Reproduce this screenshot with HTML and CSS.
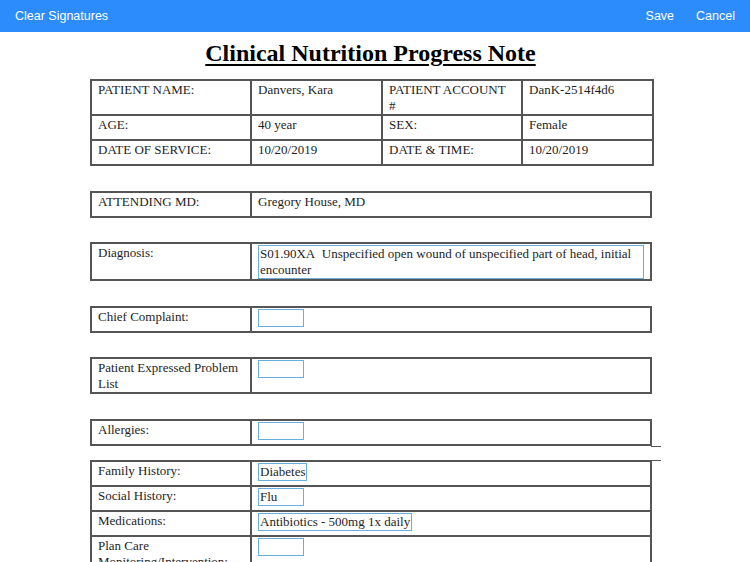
FILE: index.html
```html
<!DOCTYPE html>
<html>
<head>
<meta charset="utf-8">
<link rel="stylesheet" href="styles.css">
</head>
<body>
<header class="topbar">
  <span class="btn">Clear Signatures</span>
  <div class="right">
    <span class="btn">Save</span>
    <span class="btn">Cancel</span>
  </div>
</header>
<main class="page">
  <h1 class="title">Clinical Nutrition Progress Note</h1>

  <table class="grid four">
    <colgroup><col class="c1"><col class="c2"><col class="c3"><col class="c4"></colgroup>
    <tr><td>PATIENT NAME:</td><td>Danvers, Kara</td><td>PATIENT ACCOUNT #</td><td>DanK-2514f4d6</td></tr>
    <tr><td>AGE:</td><td>40 year</td><td>SEX:</td><td>Female</td></tr>
    <tr><td>DATE OF SERVICE:</td><td>10/20/2019</td><td>DATE &amp; TIME:</td><td>10/20/2019</td></tr>
  </table>

  <table class="grid two">
    <colgroup><col class="c1"><col></colgroup>
    <tr><td>ATTENDING MD:</td><td>Gregory House, MD</td></tr>
  </table>

  <table class="grid two">
    <colgroup><col class="c1"><col></colgroup>
    <tr><td>Diagnosis:</td><td><span class="field wide">S01.90XA&nbsp; Unspecified open wound of unspecified part of head, initial encounter</span></td></tr>
  </table>

  <table class="grid two">
    <colgroup><col class="c1"><col></colgroup>
    <tr><td>Chief Complaint:</td><td><span class="field"></span></td></tr>
  </table>

  <table class="grid two">
    <colgroup><col class="c1"><col></colgroup>
    <tr><td>Patient Expressed Problem List</td><td><span class="field"></span></td></tr>
  </table>

  <div class="tablewrap">
    <table class="grid two">
      <colgroup><col class="c1"><col></colgroup>
      <tr><td>Allergies:</td><td><span class="field"></span></td></tr>
    </table>
    <span class="stub stub-a"></span>
  </div>

  <div class="tablewrap near">
    <span class="stub stub-b"></span>
    <table class="grid two">
      <colgroup><col class="c1"><col></colgroup>
      <tr><td>Family History:</td><td><span class="field">Diabetes</span></td></tr>
      <tr><td>Social History:</td><td><span class="field">Flu</span></td></tr>
      <tr><td>Medications:</td><td><span class="field">Antibiotics - 500mg 1x daily</span></td></tr>
      <tr><td>Plan Care Monitoring/Intervention:</td><td><span class="field"></span></td></tr>
    </table>
  </div>
</main>
</body>
</html>
```

FILE: styles.css
```css
html, body {
  margin: 0;
  padding: 0;
  background: #ffffff;
  height: 562px;
  overflow: hidden;
}

.topbar {
  height: 32px;
  background: #2d8cfb;
  display: flex;
  align-items: center;
  justify-content: space-between;
  padding: 0 15px;
  font-family: "Liberation Sans", Arial, sans-serif;
  font-size: 12.5px;
  color: #ffffff;
}

.topbar .right {
  display: flex;
  gap: 22px;
}

.page {
  padding: 0 0 0 90px;
  font-family: "Liberation Serif", "Times New Roman", serif;
  font-size: 13px;
  color: #1e1e1e;
}

.title {
  width: 561px;
  margin: 6px 0 11px;
  text-align: center;
  font-size: 24px;
  line-height: 30px;
  font-weight: bold;
  text-decoration: underline;
  text-decoration-thickness: 1.5px;
  text-underline-offset: 3px;
  color: #000;
}

.grid {
  width: 562px;
  border-collapse: collapse;
  table-layout: fixed;
  margin-bottom: 24.5px;
}

.grid td {
  border: 2px solid #555555;
  padding: 1px 6px 0;
  height: 22px;
  line-height: 16px;
  vertical-align: top;
}

.c1 { width: 160px; }
.c2 { width: 131px; }
.c3 { width: 140px; }
.c4 { width: 131px; }

.field {
  display: inline-block;
  box-sizing: border-box;
  min-width: 46px;
  min-height: 18px;
  padding: 0 1px;
  border: 1px solid #6aaedb;
  line-height: 16px;
  vertical-align: top;
}

.field.wide {
  display: block;
  line-height: 16px;
}

.tablewrap {
  position: relative;
  width: 562px;
}

.tablewrap.near .grid { margin-top: -10.5px; }

.stub {
  position: absolute;
  height: 1px;
  width: 10px;
  background: #555;
}

.stub-a { right: -9px; bottom: -1px; }
.stub-b { right: -9px; top: 0; }
```
